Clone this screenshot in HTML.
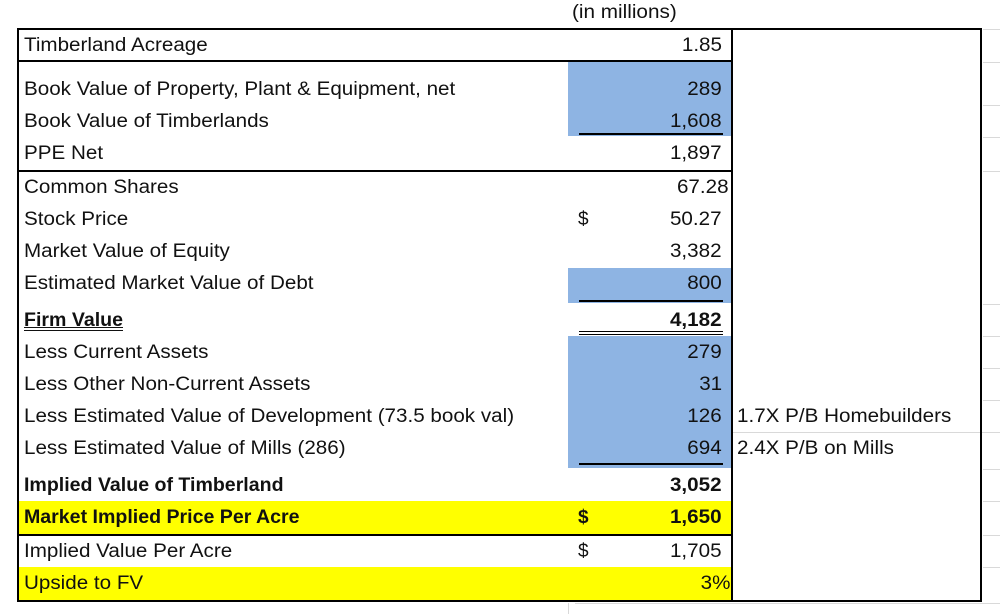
<!DOCTYPE html>
<html><head><meta charset="utf-8"><style>
body{margin:0;width:1000px;height:614px;background:#fff;position:relative;overflow:hidden;font-family:"Liberation Sans",sans-serif;font-size:19px;color:#111}
div{position:absolute}
.t{transform:scaleX(1.09);transform-origin:left center}
.l{left:24px;height:28px;line-height:28px;white-space:nowrap;transform:scaleX(1.085);transform-origin:left center}
.v{right:278px;height:28px;line-height:28px;text-align:right;white-space:nowrap;transform:scaleX(1.085);transform-origin:right center}
.d{left:578px;height:28px;line-height:28px}
.n{left:737px;height:28px;line-height:28px;white-space:nowrap;transform:scaleX(1.085);transform-origin:left center}
.b{font-weight:bold}
.l.b{transform:scaleX(1.03)}
.blue{background:#8eb4e3}
.yel{background:#ffff00}
.hl{background:#000}
.g{background:#d9d9d9}
</style></head><body>
<div class="blue" style="left:568px;top:62px;width:164px;height:74px"></div>
<div class="blue" style="left:568px;top:268px;width:164px;height:35px"></div>
<div class="blue" style="left:568px;top:336px;width:164px;height:132px"></div>
<div class="yel" style="left:18px;top:501px;width:714px;height:34px"></div>
<div class="yel" style="left:18px;top:567px;width:714px;height:34px"></div>
<div class="g" style="left:983px;top:29px;width:17px;height:1px"></div>
<div class="g" style="left:983px;top:62px;width:17px;height:1px"></div>
<div class="g" style="left:983px;top:105px;width:17px;height:1px"></div>
<div class="g" style="left:983px;top:137px;width:17px;height:1px"></div>
<div class="g" style="left:983px;top:171px;width:17px;height:1px"></div>
<div class="g" style="left:983px;top:304px;width:17px;height:1px"></div>
<div class="g" style="left:983px;top:336px;width:17px;height:1px"></div>
<div class="g" style="left:983px;top:368px;width:17px;height:1px"></div>
<div class="g" style="left:983px;top:400px;width:17px;height:1px"></div>
<div class="g" style="left:733px;top:432px;width:267px;height:1px"></div>
<div class="g" style="left:983px;top:469px;width:17px;height:1px"></div>
<div class="g" style="left:983px;top:501px;width:17px;height:1px"></div>
<div class="g" style="left:983px;top:535px;width:17px;height:1px"></div>
<div class="g" style="left:983px;top:567px;width:17px;height:1px"></div>
<div class="g" style="left:568px;top:603px;width:1px;height:11px"></div>
<div class="g" style="left:575px;top:603px;width:425px;height:1px"></div>
<div class="hl" style="left:17px;top:28px;width:965px;height:2px"></div>
<div class="hl" style="left:17px;top:600px;width:965px;height:2px"></div>
<div class="hl" style="left:17px;top:28px;width:2px;height:574px"></div>
<div class="hl" style="left:980px;top:28px;width:2px;height:574px"></div>
<div class="hl" style="left:731px;top:28px;width:2px;height:574px"></div>
<div class="hl" style="left:17px;top:60px;width:715px;height:2px"></div>
<div class="hl" style="left:17px;top:170px;width:715px;height:2px"></div>
<div class="hl" style="left:17px;top:534px;width:715px;height:2px"></div>
<div class="hl" style="left:579px;top:133px;width:144px;height:2px"></div>
<div class="hl" style="left:579px;top:300px;width:144px;height:2px"></div>
<div class="hl" style="left:579px;top:331px;width:144px;height:1px"></div>
<div class="hl" style="left:579px;top:334px;width:144px;height:1px"></div>
<div class="hl" style="left:579px;top:463px;width:144px;height:2px"></div>
<div class="t" style="left:572px;top:0;height:26px;line-height:26px">(in millions)</div>
<div class="l" style="top:32px">Timberland Acreage</div>
<div class="l" style="top:76px">Book Value of Property, Plant &amp; Equipment, net</div>
<div class="l" style="top:108px">Book Value of Timberlands</div>
<div class="l" style="top:140px">PPE Net</div>
<div class="l" style="top:174px">Common Shares</div>
<div class="l" style="top:206px">Stock Price</div>
<div class="l" style="top:238px">Market Value of Equity</div>
<div class="l" style="top:270px">Estimated Market Value of Debt</div>
<div class="l b" style="top:307px;text-decoration:underline double">Firm Value</div>
<div class="l" style="top:339px">Less Current Assets</div>
<div class="l" style="top:371px">Less Other Non-Current Assets</div>
<div class="l" style="top:403px">Less Estimated Value of Development (73.5 book val)</div>
<div class="l" style="top:435px">Less Estimated Value of Mills (286)</div>
<div class="l b" style="top:472px">Implied Value of Timberland</div>
<div class="l b" style="top:504px">Market Implied Price Per Acre</div>
<div class="l" style="top:538px">Implied Value Per Acre</div>
<div class="l" style="top:570px">Upside to FV</div>
<div class="d" style="top:206px">$</div>
<div class="d b" style="top:504px">$</div>
<div class="d" style="top:538px">$</div>
<div class="v" style="top:32px">1.85</div>
<div class="v" style="top:76px">289</div>
<div class="v" style="top:108px">1,608</div>
<div class="v" style="top:140px">1,897</div>
<div class="v" style="top:174px;right:271px">67.28</div>
<div class="v" style="top:206px">50.27</div>
<div class="v" style="top:238px">3,382</div>
<div class="v" style="top:270px">800</div>
<div class="v b" style="top:307px">4,182</div>
<div class="v" style="top:339px">279</div>
<div class="v" style="top:371px">31</div>
<div class="v" style="top:403px">126</div>
<div class="v" style="top:435px">694</div>
<div class="v b" style="top:472px">3,052</div>
<div class="v b" style="top:504px">1,650</div>
<div class="v" style="top:538px">1,705</div>
<div class="v" style="top:570px;right:270px">3%</div>
<div class="n" style="top:403px">1.7X P/B Homebuilders</div>
<div class="n" style="top:435px">2.4X P/B on Mills</div>
</body></html>
